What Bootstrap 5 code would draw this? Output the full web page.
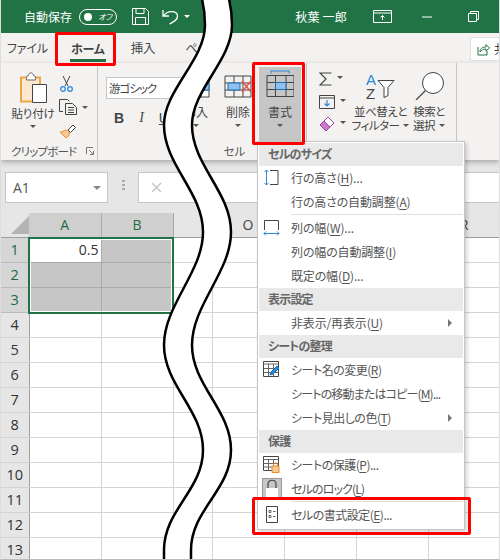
<!DOCTYPE html>
<html lang="ja">
<head>
<meta charset="utf-8">
<title>Excel</title>
<link href="https://cdn.jsdelivr.net/npm/bootstrap@5.3.0/dist/css/bootstrap.min.css" rel="stylesheet">
<style>
html,body{margin:0;background:#fff}
body{font-family:"Noto Sans CJK JP","Liberation Sans",sans-serif;font-size:12px;color:#444;font-feature-settings:"palt";line-height:14px}
.xl-app{width:500px;height:560px;overflow:hidden;position:relative;border-left:1px solid #ddd;border-right:1px solid #ddd;border-bottom:1px solid #bbb}
.xl-title{height:33px;background:#217346;color:#fff;font-size:12px;padding-left:23px}
.xl-toggle{width:38px;height:16px;border:1px solid #fff;border-radius:8px;margin-left:7px;font-size:8px;padding-left:4px;font-style:italic}
.xl-dot{width:8px;height:8px;background:#fff;border-radius:50%;margin-right:6px}
.xl-save{margin-left:15px}
.xl-undo{margin-left:13px}
.xl-tricaret{width:0;height:0;border-left:3px solid transparent;border-right:3px solid transparent;border-top:3px solid #fff;margin-left:4px}
.xl-user{margin-left:auto;margin-right:26px;letter-spacing:.2px}
.xl-ctl-a{margin-right:30px}
.xl-ctl-b{margin-right:36px}
.xl-ctl-c{margin-right:20px}
.xl-tabs{height:30px;background:#f3f2f1;color:#444;font-size:12px;padding-left:6px;letter-spacing:-.2px}
.xl-tab-home{margin-left:22px;width:36px;height:30px;font-weight:700;color:#444;position:relative;padding-top:9px;text-align:center}
.xl-tab-home::after{content:"";display:block;height:3px;background:#217346;margin-top:3px}
.xl-tab-ins{margin-left:25px;font-size:12.5px}
.xl-tab-pe{margin-left:30px}
.xl-share{margin-left:auto;margin-top:-1px;width:29px;height:24px;background:#fff;border:1px solid #e2e1e0;border-right:0;border-radius:2px 0 0 2px;padding-left:6px;overflow:hidden;white-space:nowrap;font-size:12px}
.xl-share svg{flex:none}
.xl-ribbon{height:97px;background:#f3f2f1;position:relative;z-index:1;box-shadow:0 2px 5px rgba(0,0,0,.28)}
.xl-grp{height:97px;flex:none}
.xl-grp-clip{width:97px;border-right:1px solid #c8c6c4}
.xl-grp-font{width:73px;padding:14px 0 0 8px}
.xl-grp-cell{width:136px;border-right:1px solid #c8c6c4}
.xl-grp-edit{width:150px;border-right:1px solid #c8c6c4}
.xl-grp-top{height:81px}
.xl-grp-lab{font-size:11.5px;color:#555;text-align:center;height:14px}
.xl-grp-lab-clip{padding:0 3px 0 10px;letter-spacing:-.8px}
.xl-paste{width:46px;margin-left:9px;padding-top:9px;font-size:11.5px;white-space:nowrap;letter-spacing:-.2px}
.xl-paste svg{margin-bottom:3px}
.xl-paste .xl-tri{margin-top:5px}
.xl-small{padding-top:8px;margin-left:3px}
.xl-smrow{height:24.5px}
.xl-tri{width:0;height:0;border-left:3.5px solid transparent;border-right:3.5px solid transparent;border-top:3.5px solid #555}
.xl-tri-m{margin-top:5px}
.xl-tri-s{margin-left:5px}
.xl-launch{margin-left:auto}
.xl-fontbox{width:90px;height:22px;background:#fff;border:1px solid #c6c6c6;padding:3px 0 0 2px;white-space:nowrap;font-size:11.5px;letter-spacing:-1px}
.xl-biu{margin-top:12px;padding-left:8px;gap:15px;font-size:14px;color:#444}
.xl-biu b,.xl-biu u{font-family:"Liberation Sans",sans-serif}
.xl-biu i{font-family:"Liberation Serif",serif}
.xl-cbtn{width:42px;height:74px;padding-top:3px;margin-top:4px}
.xl-cbtn-ins{margin-left:4px}
.xl-cbtn svg{height:31px;margin-bottom:4px}
.xl-cbtn-on{background:#c6c6c6}
.xl-cbtn .xl-lab{height:14px}
.xl-cell-lab{padding-right:8px}
.xl-edit-l{width:46px;padding:9px 0 0 12px}
.xl-edit-l .xl-smrow{height:22.5px}
.xl-sort{width:55px;padding-top:9px}
.xl-srch{width:42px;padding-top:9px}
.xl-sort svg,.xl-srch svg{margin-bottom:4px}
.xl-edit-lab{white-space:nowrap;line-height:14px;font-size:11.5px;letter-spacing:-.5px}
.xl-fbar{height:53px;background:#e6e6e6;padding:12px 0 0 4px}
.xl-namebox{width:103px;height:31px;background:#fff;border:1px solid #c6c6c6;padding-left:7px;font-size:14px;font-family:"Open Sans",sans-serif;color:#555}
.xl-tri-g{border-left:4px solid transparent;border-right:4px solid transparent;border-top:4px solid #888;margin-left:auto;margin-right:6px}
.xl-dots{margin-left:14px;width:3px;gap:2px;margin-right:13px}
.xl-dots span{height:2px;background:#aaa}
.xl-fbox{flex:1;height:31px;background:#fff;border:1px solid #c6c6c6;border-right:0;padding-left:12px}
.xl-sheet{table-layout:fixed;width:499px;background:#fff;position:relative}
.xl-sheet th{height:24px;padding:0;background:#e6e6e6;font-weight:400;text-align:center;font-size:14px;color:#444;font-family:"Open Sans",sans-serif;border-bottom:1px solid #9f9f9f}
.xl-sheet th.xl-hsel{background:#cfcfcf;color:#1e6b41;border-right:1px solid #aaa}
.xl-sheet tbody th{height:25px;border-right:1px solid #9f9f9f;border-bottom:1px solid #d4d4d4;background:#e6e6e6;font-size:14.5px;color:#333}
.xl-sheet tbody th.xl-rsel{background:#d6d6d6;color:#1e6b41;border-bottom-color:#bbb}
.xl-sheet td{height:25px;padding:0;border-right:1px solid #d4d4d4;border-bottom:1px solid #d4d4d4}
.xl-sheet td.xl-csel{background:#c6c6c6;border-color:#aaa}
.xl-sheet td.xl-cnum{text-align:right;padding-right:2px;font-size:14px;color:#333;font-family:"Open Sans",sans-serif;border-color:#aaa}
.xl-cols col:first-child{width:28px}
.xl-selbox{position:absolute;left:27px;top:237px;width:146px;height:77px;border:2px solid #217346;outline:1px solid #fff;outline-offset:-3px;pointer-events:none;z-index:2}
.xl-menu{position:absolute;left:256px;top:141px;width:208px;height:389px;background:#fff;border:1px solid #c6c6c6;padding:1px;box-shadow:2px 2px 4px rgba(0,0,0,.18);z-index:3;font-size:12px;color:#555;letter-spacing:-.15px}
.xl-mh{height:23px;background:#e9e9e9;padding-left:9px;line-height:22px;font-weight:700;color:#666;letter-spacing:-.8px}
.xl-mi{height:24px;padding-left:32px;line-height:24px;position:relative;white-space:nowrap}
.xl-mi svg,.xl-lock{position:absolute;left:4px;top:3px}
.xl-mi u{text-underline-offset:2px}
.xl-kana{letter-spacing:-.85px}
.xl-kana2{letter-spacing:-.5px}
.xl-sub{position:absolute;right:11px;top:8px;width:0;height:0;border-top:4px solid transparent;border-bottom:4px solid transparent;border-left:4px solid #777}
.xl-sep{height:1px;background:#e0e0e0;margin:0 0 1px 32px}
.xl-lock{left:3px;top:1px;width:20px;height:20px;background:#c6c6c6;border:1px solid #999}
.xl-wave{position:absolute;left:0;top:0;z-index:4}
.xl-red{position:absolute;border:3px solid #f00;border-radius:2px;z-index:5;pointer-events:none}
.xl-red-home{left:54px;top:32px;width:61px;height:34px}
.xl-red-fmt{left:251px;top:62px;width:53px;height:83px}
.xl-red-cell{left:251px;top:497px;width:219px;height:38px}
</style>
</head>
<body>
<div class="xl-app">
  <header class="xl-title d-flex align-items-center">
    <span>自動保存</span>
    <span class="xl-toggle d-flex align-items-center"><span class="xl-dot"></span>オフ</span>
    <svg class="xl-save" width="17" height="17" viewBox="0 0 17 17" fill="none" stroke="#fff"><path d="M.5.500h13l3 3v13H.5z"/><path d="M4 .5v5h8v-5M3.500 16.500V9.500h10v7"/></svg>
    <svg class="xl-undo" width="18" height="17" viewBox="0 0 18 17" fill="none" stroke="#fff" stroke-width="1.300"><path d="M1 2v6h6M1.500 8C5 2.500 15 2 15.500 8c.3 4-4 6-8 8"/></svg>
    <span class="xl-tricaret"></span>
    <span class="xl-user">秋葉 一郎</span>
    <svg class="xl-ctl-a" width="19" height="13" viewBox="0 0 19 13" fill="none" stroke="#fff"><path d="M.5.500h18v12H.5zM.5 3h18M9.500 10V5.500M7.500 7.500l2-2 2 2"/></svg>
    <svg class="xl-ctl-b" width="10" height="2" viewBox="0 0 10 2"><path d="M0 1h10" stroke="#fff"/></svg>
    <svg class="xl-ctl-c" width="11" height="11" viewBox="0 0 11 11" fill="none" stroke="#fff"><path d="M.5 2.500h8v8h-8zM2.500 2.500v-2h8v8h-2"/></svg>
  </header>

  <nav class="xl-tabs d-flex align-items-start">
    <span class="pt-2">ファイル</span>
    <span class="xl-tab-home">ホーム</span>
    <span class="xl-tab-ins pt-2">挿入</span>
    <span class="xl-tab-pe pt-2">ページ</span>
    <span class="xl-share d-flex align-items-center mt-1">
      <svg width="13" height="13" viewBox="0 0 13 13" fill="none" stroke="#217346"><path d="M1 4v8h9V8M3 9c0-4 3-5 6-5V1.500L12.500 5 9 8V6C6.500 6 4.500 7 3 9z"/></svg><span class="ms-1">共有</span>
    </span>
  </nav>

  <section class="xl-ribbon d-flex">
    <div class="xl-grp xl-grp-clip">
      <div class="xl-grp-top d-flex">
        <div class="xl-paste d-flex flex-column align-items-center">
          <svg width="27" height="31" viewBox="0 0 27 31" fill="none"><path d="M1 5.500h19v24H1z" fill="#fbe8cf" stroke="#eda546" stroke-width="2"/><path d="M6.500 6.500C6.500 4 7.500 3.500 8.500 3.500c0-3.500 4.500-3.500 5 0 1 0 2 .5 2 3v1.500h-9z" fill="#fff" stroke="#666"/><path d="M12.500 12.500h14v18h-14z" fill="#fff" stroke="#444"/></svg>
          <span>貼り付け</span>
          <span class="xl-tri"></span>
        </div>
        <div class="xl-small d-flex flex-column">
          <div class="xl-smrow d-flex align-items-center"><svg width="15" height="17" viewBox="0 0 15 17" fill="none"><path d="M4 1l5 10M11 1L6 11" stroke="#444"/><circle cx="4" cy="14" r="2.300" stroke="#2b88d8" stroke-width="1.300"/><circle cx="11" cy="14" r="2.300" stroke="#2b88d8" stroke-width="1.300"/></svg></div>
          <div class="xl-smrow d-flex align-items-center"><svg width="18" height="16" viewBox="0 0 18 16" fill="none" stroke="#444"><path d="M4 12.500H.5V.5h8l2 2"/><path d="M6.500 4.500h7l4 4v7h-11zM9 8.500h6M9 11h6M9 13.500h6"/></svg><span class="xl-tri xl-tri-s"></span></div>
          <div class="xl-smrow d-flex align-items-center"><svg width="18" height="16" viewBox="0 0 18 16"><path d="M1 8l6 6c2-1 3-3 3.500-5L7 5.500C5 7 3 8 1 8z" fill="#f6c894" stroke="#e68a2e"/><path d="M9 6l5-5 2.500 2.500-5 5z" fill="#fff" stroke="#444"/></svg></div>
        </div>
      </div>
      <div class="xl-grp-lab xl-grp-lab-clip d-flex align-items-center">
        <span>クリップボード</span>
        <svg class="xl-launch" width="8" height="8" viewBox="0 0 8 8" fill="none" stroke="#777"><path d="M.5 7V.5H7M3 3l4 4M4 7.500h3.500V4"/></svg>
      </div>
    </div>

    <div class="xl-grp xl-grp-font">
      <div class="xl-fontbox">游ゴシック</div>
      <div class="xl-biu d-flex"><b>B</b><i>I</i><u>U</u></div>
    </div>

    <div class="xl-grp xl-grp-cell">
      <div class="xl-grp-top d-flex">
        <div class="xl-cbtn xl-cbtn-ins d-flex flex-column align-items-center">
          <svg width="28" height="31" viewBox="0 0 28 31"><path d="M1 6h26v21H1z" fill="#fff" stroke="#444"/><path d="M1 13h26M1 20h26M10 6v21M19 6v21" stroke="#444"/><path d="M10 13h17v7H10z" fill="#8fc1ec" stroke="#1b6fb5"/></svg>
          <span class="xl-lab">挿入</span>
          <span class="xl-tri xl-tri-m"></span>
        </div>
        <div class="xl-cbtn d-flex flex-column align-items-center">
          <svg width="28" height="31" viewBox="0 0 28 31" fill="none"><path d="M1 6h26v21H1zM1 13h26M1 20h26M10 6v21M19 6v21" stroke="#444"/><path d="M4 13h12v7H4z" fill="#8fc1ec" stroke="#1b6fb5"/><path d="M18 11l9 11M27 11l-9 11" stroke="#e8504a" stroke-width="1.500"/></svg>
          <span class="xl-lab">削除</span>
          <span class="xl-tri xl-tri-m"></span>
        </div>
        <div class="xl-cbtn xl-cbtn-on d-flex flex-column align-items-center">
          <svg width="28" height="31" viewBox="0 0 28 31" fill="none"><path d="M5 1h18M5 .5v3M23 .5v3" stroke="#2b88d8"/><path d="M1 5.500h27v21H1zM1 12.500h27M1 19.500h27M9.500 5.500v21M20 5.500v21" stroke="#444"/><path d="M9.500 12.500H20v7H9.500z" fill="#8fc1ec" stroke="#1b6fb5"/></svg>
          <span class="xl-lab">書式</span>
          <span class="xl-tri xl-tri-m"></span>
        </div>
      </div>
      <div class="xl-grp-lab xl-cell-lab">セル</div>
    </div>

    <div class="xl-grp xl-grp-edit d-flex">
      <div class="xl-edit-l d-flex flex-column">
        <div class="xl-smrow d-flex align-items-start"><svg width="13" height="14" viewBox="0 0 13 14" fill="none" stroke="#444" stroke-width="1.200"><path d="M12.500 1H1l6 6-6 6h11.500"/></svg><span class="xl-tri xl-tri-s mt-1"></span></div>
        <div class="xl-smrow d-flex align-items-start"><svg width="16" height="14" viewBox="0 0 16 14" fill="none"><path d="M.5.500h15v13H.5zM.5 3h15" stroke="#444"/><path d="M8 5v6M5.500 8.500L8 11l2.500-2.500" stroke="#2b88d8" stroke-width="1.200"/></svg><span class="xl-tri xl-tri-s mt-1"></span></div>
        <div class="xl-smrow d-flex align-items-start"><svg width="16" height="15" viewBox="0 0 16 15"><path d="M1 8l6 6 8-8-6-6z" fill="#c77bcb" stroke="#a23fa7"/><path d="M5 4l6 6 4-4-6-6z" fill="#fff" stroke="#a23fa7"/></svg><span class="xl-tri xl-tri-s mt-1"></span></div>
      </div>
      <div class="xl-sort d-flex flex-column align-items-center">
        <svg width="29" height="28" viewBox="0 0 29 28"><text x="0" y="13" font-family="Liberation Sans" font-size="15" fill="#2b88d8">A</text><text x="0" y="27" font-family="Liberation Sans" font-size="15" fill="#444">Z</text><path d="M12 8.500h16l-6 7v8l-4 2v-10z" fill="#fff" stroke="#444"/></svg>
        <span class="xl-edit-lab">並べ替えと</span>
        <span class="xl-edit-lab d-flex align-items-center">フィルター<span class="xl-tri ms-1"></span></span>
      </div>
      <div class="xl-srch d-flex flex-column align-items-center">
        <svg width="29" height="28" viewBox="0 0 29 28" fill="none" stroke="#444"><circle cx="18" cy="11" r="10.500" fill="#fff"/><path d="M10.500 18.500L1 28" stroke-width="1.200"/></svg>
        <span class="xl-edit-lab">検索と</span>
        <span class="xl-edit-lab d-flex align-items-center">選択<span class="xl-tri ms-1"></span></span>
      </div>
    </div>
  </section>

  <div class="xl-fbar d-flex align-items-start">
    <div class="xl-namebox d-flex align-items-center">A1<span class="xl-tri xl-tri-g"></span></div>
    <div class="xl-dots d-flex flex-column mt-2"><span></span><span></span><span></span></div>
    <div class="xl-fbox d-flex align-items-center"><svg width="11" height="11" viewBox="0 0 11 11"><path d="M1 1l9 9M10 1l-9 9" stroke="#c8c8c8" stroke-width="1.500"/></svg></div>
  </div>

  <table class="xl-sheet">
    <colgroup class="xl-cols"><col><col style="width:72px"><col style="width:72px"><col style="width:39px"><col style="width:72px"><col style="width:72px"><col style="width:72px"><col style="width:72px"></colgroup>
    <thead><tr>
      <th><svg class="d-block ms-auto" width="18" height="18" viewBox="0 0 18 18"><path d="M18 0v18H0z" fill="#b4b4b4"/></svg></th>
      <th class="xl-hsel">A</th><th class="xl-hsel">B</th><th></th><th>O</th><th></th><th></th><th>R</th>
    </tr></thead>
    <tbody>
      <tr><th class="xl-rsel">1</th><td class="xl-cnum">0.5</td><td class="xl-csel"></td><td></td><td></td><td></td><td></td><td></td></tr>
      <tr><th class="xl-rsel">2</th><td class="xl-csel"></td><td class="xl-csel"></td><td></td><td></td><td></td><td></td><td></td></tr>
      <tr><th class="xl-rsel">3</th><td class="xl-csel"></td><td class="xl-csel"></td><td></td><td></td><td></td><td></td><td></td></tr>
      <tr><th>4</th><td></td><td></td><td></td><td></td><td></td><td></td><td></td></tr>
      <tr><th>5</th><td></td><td></td><td></td><td></td><td></td><td></td><td></td></tr>
      <tr><th>6</th><td></td><td></td><td></td><td></td><td></td><td></td><td></td></tr>
      <tr><th>7</th><td></td><td></td><td></td><td></td><td></td><td></td><td></td></tr>
      <tr><th>8</th><td></td><td></td><td></td><td></td><td></td><td></td><td></td></tr>
      <tr><th>9</th><td></td><td></td><td></td><td></td><td></td><td></td><td></td></tr>
      <tr><th>10</th><td></td><td></td><td></td><td></td><td></td><td></td><td></td></tr>
      <tr><th>11</th><td></td><td></td><td></td><td></td><td></td><td></td><td></td></tr>
      <tr><th>12</th><td></td><td></td><td></td><td></td><td></td><td></td><td></td></tr>
      <tr><th>13</th><td></td><td></td><td></td><td></td><td></td><td></td><td></td></tr>
    </tbody>
  </table>

  <div class="xl-selbox"></div>

  <div class="xl-menu">
    <div class="xl-mh">セルのサイズ</div>
    <div class="xl-mi"><svg width="17" height="17" viewBox="0 0 17 17" fill="none"><path d="M7 1.500h8v14H7" stroke="#444"/><path d="M3.500 1v15M1.500 3l2-2 2 2M1.500 14l2 2 2-2" stroke="#2b88d8"/></svg>行の高さ(<u>H</u>)...</div>
    <div class="xl-mi">行の高さの自動調整(<u>A</u>)</div>
    <div class="xl-sep"></div>
    <div class="xl-mi"><svg width="17" height="17" viewBox="0 0 17 17" fill="none"><path d="M1.500 11V1.500h14V11" stroke="#444"/><path d="M1 14.500h15M3 12.500l-2 2 2 2M14 12.500l2 2-2 2" stroke="#2b88d8"/></svg>列の幅(<u>W</u>)...</div>
    <div class="xl-mi">列の幅の自動調整(<u>I</u>)</div>
    <div class="xl-mi">既定の幅(<u>D</u>)...</div>
    <div class="xl-mh">表示設定</div>
    <div class="xl-mi">非表示/再表示(<u>U</u>)<span class="xl-sub"></span></div>
    <div class="xl-mh">シートの整理</div>
    <div class="xl-mi xl-kana2"><svg width="17" height="17" viewBox="0 0 17 17" fill="none"><path d="M.5.500h15v15H.5z" stroke="#444"/><path d="M.5 3h15M.5 7.500h15M.5 11.500h15M5.500 3v12.500M10.500 3v12.500" stroke="#666"/><path d="M7 14l1-3 6-6 2 2-6 6z" fill="#2b88d8" stroke="#1b6fb5"/></svg>シート名の変更(<u>R</u>)</div>
    <div class="xl-mi xl-kana">シートの移動またはコピー(<u>M</u>)...</div>
    <div class="xl-mi xl-kana2">シート見出しの色(<u>T</u>)<span class="xl-sub"></span></div>
    <div class="xl-mh">保護</div>
    <div class="xl-mi xl-kana2"><svg width="17" height="17" viewBox="0 0 17 17" fill="none"><path d="M.5.500h15v14H.5z" stroke="#444"/><path d="M.5 3.500h15M.5 7.500h15M.5 11h15M5.500 3.500v11M10.500 3.500v5" stroke="#666"/><path d="M9 10h7v6.500H9z" fill="#f6c894" stroke="#e68a2e"/><path d="M10.500 10V8.500c0-2 4-2 4 0V10" stroke="#e68a2e"/></svg>シートの保護(<u>P</u>)...</div>
    <div class="xl-mi xl-kana"><span class="xl-lock d-flex justify-content-center"><svg class="position-static" width="14" height="18" viewBox="0 0 14 18" fill="none"><path d="M1 9h12v9H1z" fill="#fff"/><path d="M3 9V5c0-5 8-5 8 0v4" stroke="#444" stroke-width="1.200"/></svg></span>セルのロック(<u>L</u>)</div>
    <div class="xl-sep"></div>
    <div class="xl-mi xl-kana2"><svg width="17" height="17" viewBox="0 0 17 17" fill="none" stroke="#444"><path d="M3.500.5h11v16h-11z"/><path d="M6 4.500h2v2H6zM6 9.500h2v2H6zM10 5.500h2.500M10 10.500h2.500" stroke="#666"/></svg>セルの書式設定(<u>E</u>)...</div>
  </div>

  <svg class="xl-wave" width="500" height="560" viewBox="0 0 500 560">
    <path d="M194-20C200-8 204 8 204 25C204 60 163 90 163 125C163 165 202 192 202 232C202 272 163 305 163 345C163 385 202 410 202 450C202 490 163 510 163 550L163 580H190L190 550C190 510 230 490 230 450C230 410 191 385 191 345C191 305 230 272 230 232C230 192 191 165 191 125C191 90 231 60 231 25C231 8 227-8 221-20Z" fill="#fff" stroke="none"/>
    <path d="M194-20C200-8 204 8 204 25C204 60 163 90 163 125C163 165 202 192 202 232C202 272 163 305 163 345C163 385 202 410 202 450C202 490 163 510 163 550L163 580M221-20C227-8 231 8 231 25C231 60 191 90 191 125C191 165 230 192 230 232C230 272 191 305 191 345C191 385 230 410 230 450C230 490 190 510 190 550L190 580" fill="none" stroke="#000" stroke-width="2.500"/>
  </svg>

  <div class="xl-red xl-red-home"></div>
  <div class="xl-red xl-red-fmt"></div>
  <div class="xl-red xl-red-cell"></div>
</div>
<script src="https://cdn.jsdelivr.net/npm/bootstrap@5.3.0/dist/js/bootstrap.bundle.min.js"></script>
</body>
</html>
